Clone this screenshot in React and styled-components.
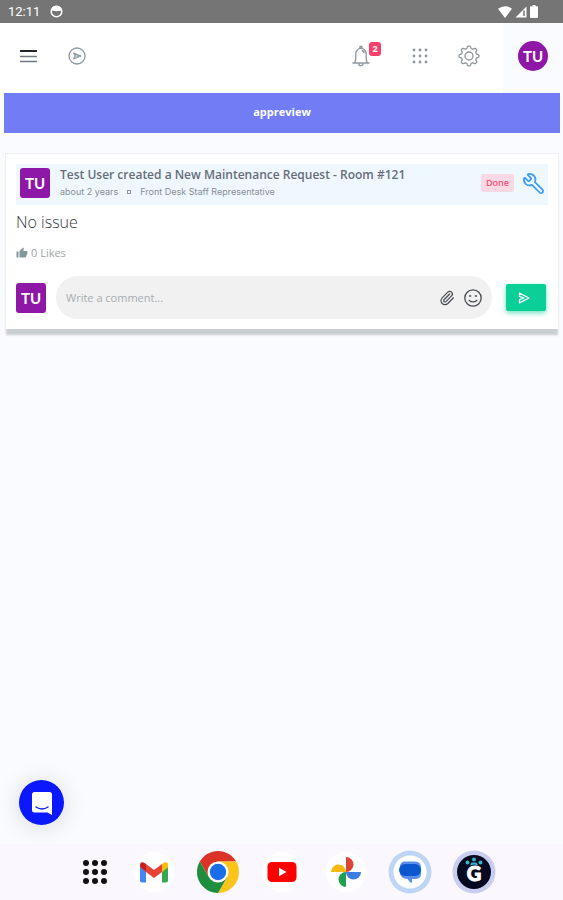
import React from "react"
import styled, { createGlobalStyle } from "styled-components"
import { Paperclip, Wrench } from "lucide-react"
import { MdThumbUp } from "react-icons/md"

const GlobalStyle = createGlobalStyle`
  * {
    box-sizing: border-box;
  }
  body {
    margin: 0;
    background: #fafbfe;
    color: #3f4650;
    font-family: "Open Sans", "Noto Sans", sans-serif;
  }
  button,
  input {
    font-family: inherit;
  }
  button {
    padding: 0;
    border: 0;
    background: none;
    cursor: pointer;
  }
  svg {
    display: block;
  }
`

const Page = styled.div`
  min-height: 100vh;
  display: flex;
  flex-direction: column;
`

const StatusBar = styled.div`
  height: 23px;
  padding: 0 25px 0 8px;
  display: flex;
  align-items: center;
  justify-content: space-between;
  background: #757575;
  color: #fff;
  font-family: Roboto, sans-serif;
  font-size: 13px;
`

const StatusGroup = styled.div`
  display: flex;
  align-items: center;
  gap: ${(props) => props.$gap}px;
`

const TopBar = styled.header`
  height: 70px;
  padding-left: 20px;
  display: flex;
  background: #fff;
`

const NavGroup = styled.div`
  display: flex;
  align-items: center;
  gap: ${(props) => props.$gap}px;
  padding-bottom: 4px;
  margin-right: ${(props) => props.$after};
`

const IconButton = styled.button`
  position: relative;
  display: flex;
  color: ${(props) => props.$color || "#8d979e"};
`

const Count = styled.span`
  position: absolute;
  top: -3px;
  right: -10px;
  width: 12px;
  height: 14px;
  border-radius: 3px;
  background: #f5416c;
  color: #fff;
  font-size: 9px;
  font-weight: 700;
  line-height: 14px;
  text-align: center;
`

const Profile = styled.div`
  width: 60px;
  padding-bottom: 4px;
  display: flex;
  align-items: center;
  justify-content: center;
  background: #fafbfe;
`

const Avatar = styled.span`
  flex: none;
  width: 30px;
  height: 30px;
  display: flex;
  align-items: center;
  justify-content: center;
  border-radius: ${(props) => (props.$round ? "50%" : "3px")};
  background: #8e17a8;
  color: #fff;
  font-family: Lato, sans-serif;
  font-size: 15px;
  font-weight: 700;
`

const Banner = styled.div`
  height: 40px;
  margin: 0 3px 0 4px;
  background: #727cf5;
  color: #fff;
  font-size: 11px;
  font-weight: 700;
  line-height: 38px;
  text-align: center;
`

const Card = styled.article`
  margin: 20px 4px 0 5px;
  padding: 10px;
  border: 1px solid #eef0f4;
  border-bottom: 0;
  background: #fff;
  box-shadow: 0 7px 2px -1px #c9ced1;
`

const CardHead = styled.header`
  min-height: 41px;
  padding: 0 3px 3px 4px;
  display: flex;
  align-items: center;
  background: #f0f8ff;
`

const Heading = styled.div`
  flex: 1;
  min-width: 0;
  margin-left: 10px;
`

const Title = styled.h1`
  margin: 0;
  font-size: 12px;
  font-weight: 600;
  line-height: 18px;
  color: #656d78;
`

const Meta = styled.p`
  margin: 0;
  display: flex;
  align-items: center;
  gap: 9px;
  font-family: Inter, sans-serif;
  font-size: 9px;
  line-height: 16px;
  color: #858d95;
`

const Dot = styled.span`
  width: 4px;
  height: 4px;
  border: 1px solid #8f989f;
`

const Tag = styled.span`
  margin-right: 8px;
  padding: 0 5px;
  border-radius: 2px;
  background: #fbd9e4;
  color: #f0527f;
  font-size: 9px;
  font-weight: 600;
  line-height: 18px;
`

const FlippedWrench = styled(Wrench)`
  transform: scaleX(-1);
`

const Message = styled.p`
  margin: 6px 0 0;
  font-size: 16px;
  line-height: 22px;
  font-weight: 300;
  color: #32373d;
`

const Likes = styled.button`
  margin-top: 11px;
  display: flex;
  align-items: center;
  gap: 3px;
  font-size: 11px;
  line-height: 18px;
  color: #a0a6aa;
  svg {
    color: #84979a;
  }
`

const CommentForm = styled.form`
  margin-top: 14px;
  padding-right: 2px;
  display: flex;
  align-items: center;
`

const Field = styled.div`
  flex: 1;
  min-width: 0;
  height: 43px;
  margin: 0 14px 0 10px;
  padding: 0 10px;
  display: flex;
  align-items: center;
  gap: 9px;
  border-radius: 22px;
  background: #f1f1f1;
`

const CommentInput = styled.input`
  flex: 1;
  min-width: 0;
  padding: 0;
  border: 0;
  outline: 0;
  background: none;
  font-size: 11px;
  &::placeholder {
    color: #a8acb0;
    opacity: 1;
  }
`

const SendButton = styled.button`
  width: 40px;
  height: 27px;
  padding-right: 5px;
  display: flex;
  align-items: center;
  justify-content: center;
  border-radius: 2px;
  background: #0acf97;
  box-shadow: 0 2px 5px rgba(10, 207, 151, 0.6);
`

const Launcher = styled.button`
  position: fixed;
  left: 19px;
  bottom: 75px;
  width: 45px;
  height: 45px;
  display: flex;
  align-items: center;
  justify-content: center;
  border-radius: 50%;
  background: #0a18fb;
  box-shadow: 0 2px 24px rgba(0, 0, 0, 0.14);
`

const Dock = styled.nav`
  height: 56px;
  margin-top: auto;
  padding-left: 10px;
  display: flex;
  align-items: center;
  justify-content: center;
  gap: 20px;
  background: #faf8fe;
`

const DockButton = styled.button`
  width: ${(props) => (props.$narrow ? 34 : 44)}px;
  height: 44px;
  display: flex;
  align-items: center;
  justify-content: center;
  color: #111;
`

const DotGrid = ({ size, step, r }) => (
  <svg width={size} height={size} viewBox={`0 0 ${size} ${size}`} fill="currentColor">
    {[-1, 0, 1].map((row) =>
      [-1, 0, 1].map((col) => (
        <circle
          key={`${row}${col}`}
          cx={size / 2 + col * step}
          cy={size / 2 + row * step}
          r={r}
        />
      ))
    )}
  </svg>
)

const FaceIcon = () => (
  <svg width="13" height="13" viewBox="0 0 13 13">
    <circle cx="6.5" cy="6.5" r="5.3" fill="none" stroke="#fff" strokeWidth="1.5" />
    <path d="M1.5 5.5V4A5.5 5.5 0 0 1 11.5 4v1.5Q6.5 7 1.5 5.5z" fill="#fff" />
  </svg>
)

const WifiIcon = () => (
  <svg width="14" height="12" viewBox="0 0 14 12">
    <path d="M0 2.8Q7-2.4 14 2.8L7 12z" fill="#fff" />
  </svg>
)

const SignalIcon = () => (
  <svg width="12" height="12" viewBox="0 0 12 12">
    <path d="M11.5 0.5V11.5H0.5z" fill="#fff" />
    <path d="M9 4.5V10" stroke="#757575" strokeWidth="1.5" />
  </svg>
)

const BatteryIcon = () => (
  <svg width="8" height="13" viewBox="0 0 8 13">
    <path d="M2.5 0h3v1.3H7q1 0 1 1V12q0 1-1 1H1q-1 0-1-1V2.3q0-1 1-1h1.5z" fill="#fff" />
  </svg>
)

const MenuIcon = () => (
  <svg width="18" height="13" viewBox="0 0 18 13">
    <path d="M0 1h17" stroke="#23272d" strokeWidth="2" />
    <path d="M0 6.5h17M0 11.5h17" stroke="#737980" strokeWidth="1.6" />
  </svg>
)

const ShareIcon = () => (
  <svg width="18" height="18" viewBox="0 0 18 18" fill="none" stroke="currentColor">
    <circle cx="9" cy="9" r="8" strokeWidth="1.3" />
    <path d="M5.5 6l7.5 3-7.5 3 1.8-3zM7.3 9H11" strokeWidth="1.2" strokeLinejoin="round" />
  </svg>
)

const BellIcon = () => (
  <svg width="20" height="22" viewBox="0 0 20 22" fill="none" stroke="currentColor" strokeWidth="1.3">
    <path d="M9 3V1.5h2V3M1.5 18h17M3.8 17.5Q4.8 16 4.8 13V9a5.2 5.6 0 0 1 10.4 0v4q0 3 1 4.5" />
    <path d="M7.8 18.5a2.2 2.2 0 0 0 4.4 0M10.8 5.5a2.7 2.7 0 0 1 2.3 2.8" />
  </svg>
)

// eight soft teeth: the radius swings either side of 8.8
const gearPoints = Array.from({ length: 96 }, (_, i) => {
  const angle = (i / 96) * Math.PI * 2
  const radius = 8.8 + 1.2 * Math.tanh(2 * Math.cos(8 * angle))
  return `${11 + radius * Math.cos(angle)},${11 + radius * Math.sin(angle)}`
}).join(" ")

const GearIcon = () => (
  <svg width="22" height="22" viewBox="0 0 22 22" fill="none" stroke="currentColor" strokeWidth="1.3">
    <polygon points={gearPoints} strokeLinejoin="round" />
    <circle cx="11" cy="11" r="4" />
  </svg>
)

const SmileIcon = () => (
  <svg width="18" height="18" viewBox="0 0 18 18" fill="none" stroke="currentColor" strokeWidth="1.3">
    <circle cx="9" cy="9" r="8.2" />
    <path d="M5.2 11.4q3.8 3 7.6 0M5.5 7h1.2M11.3 7h1.2" strokeLinecap="round" />
  </svg>
)

const SendIcon = () => (
  <svg width="12" height="12" viewBox="0 0 12 12" fill="none" stroke="#fff" strokeWidth="1.3">
    <path d="M1.5 1.2L11 6l-9.5 4.8V7.6L6 6 1.5 4.4z" strokeLinejoin="round" />
  </svg>
)

const ChatIcon = () => (
  <svg width="22" height="24" viewBox="0 0 22 24">
    <path d="M3.5 1h15Q21 1 21 3.5V24l-4.5-2.5h-13Q1 21.5 1 19V3.5Q1 1 3.5 1z" fill="#fff" />
    <path d="M5 16q6 4 12 0" fill="none" stroke="#0a18fb" strokeWidth="1.4" strokeLinecap="round" />
  </svg>
)

const GmailIcon = () => (
  <svg width="42" height="42" viewBox="0 0 42 42">
    <circle cx="21" cy="21" r="20" fill="#fff" />
    <path d="M7 16l6 4.5V31.5H9q-2 0-2-2z" fill="#4285f4" />
    <path d="M35 16l-6 4.5V31.5h4q2 0 2-2z" fill="#34a853" />
    <path d="M29 13l1-.8q5-2.5 5 2.3V16l-6 5z" fill="#fbbc04" />
    <path d="M13 13l-1-.8q-5-2.5-5 2.3V16l6 5z" fill="#c5221f" />
    <path d="M13 13l8 6 8-6v8l-8 6-8-6z" fill="#ea4335" />
  </svg>
)

const ChromeIcon = () => (
  <svg width="42" height="42" viewBox="2 2 44 44">
    <path d="M4.95 13A22 22 0 0 1 43.05 13H24v11l-9.53 5.5z" fill="#db3328" />
    <path d="M43.05 13A22 22 0 0 1 24 46l9.53-16.5L24 24V13z" fill="#fcc419" />
    <path d="M24 46A22 22 0 0 1 4.95 13l9.52 16.5L24 24l9.53 5.5z" fill="#1e8e3e" />
    <circle cx="24" cy="24" r="11" fill="#fff" />
    <circle cx="24" cy="24" r="8.6" fill="#1a6fe8" />
  </svg>
)

const YoutubeIcon = () => (
  <svg width="42" height="42" viewBox="0 0 42 42">
    <circle cx="21" cy="21" r="20" fill="#fff" />
    <rect x="6.5" y="11" width="29" height="20" rx="4.5" fill="#f00" />
    <path d="M18 16.8l7.5 4.2-7.5 4.2z" fill="#fff" />
  </svg>
)

const PhotosIcon = () => (
  <svg width="42" height="42" viewBox="0 0 42 42">
    <circle cx="21" cy="21" r="20" fill="#fff" />
    <path d="M21 6a7.5 7.5 0 0 1 0 15z" fill="#db4437" />
    <path d="M36 21a7.5 7.5 0 0 1-15 0z" fill="#3b7de0" />
    <path d="M21 36a7.5 7.5 0 0 1 0-15z" fill="#1fa050" />
    <path d="M6 21a7.5 7.5 0 0 1 15 0z" fill="#f5b912" />
  </svg>
)

const MessagesIcon = () => (
  <svg width="44" height="44" viewBox="0 0 44 44">
    <circle cx="22" cy="22" r="21.5" fill="#bfd5f3" />
    <circle cx="22" cy="22" r="16.5" fill="#fff" />
    <path d="M17 11.5h10q6 0 6 6v6q0 5-5 5.500h-4V33q-3-1-4.500-4Q12 28.500 12 22v-5q0-5.500 5-5.500z" fill="#5a8fee" />
    <rect x="11" y="14" width="22" height="12" rx="6" fill="#0b57d0" />
  </svg>
)

const GuestIcon = () => (
  <svg width="44" height="44" viewBox="0 0 44 44">
    <circle cx="22" cy="22" r="21.5" fill="#c9cdee" />
    <circle cx="22" cy="22" r="17" fill="#050a20" />
    <g fill="#35b6cf">
      <circle cx="15.5" cy="12.5" r="1.9" />
      <circle cx="22" cy="9.5" r="1.9" />
      <circle cx="28.5" cy="12.5" r="1.9" />
      <path d="M18 15.5l1.5-3h5l1.5 3-4-1z" />
    </g>
    <text
      x="22"
      y="31"
      fill="#fff"
      stroke="#fff"
      textAnchor="middle"
      fontFamily="Lato, sans-serif"
      fontSize="20"
      fontWeight="900"
    >
      G
    </text>
  </svg>
)

const apps = [
  { name: "All apps", narrow: true, icon: <DotGrid size={28} step={9} r={3} /> },
  { name: "Gmail", icon: <GmailIcon /> },
  { name: "Chrome", icon: <ChromeIcon /> },
  { name: "YouTube", icon: <YoutubeIcon /> },
  { name: "Photos", icon: <PhotosIcon /> },
  { name: "Messages", icon: <MessagesIcon /> },
  { name: "Guest app", icon: <GuestIcon /> },
]

const App = () => (
  <Page>
    <GlobalStyle />
    <StatusBar>
      <StatusGroup $gap={10}>
        <span>12:11</span>
        <FaceIcon />
      </StatusGroup>
      <StatusGroup $gap={3}>
        <WifiIcon />
        <SignalIcon />
        <BatteryIcon />
      </StatusGroup>
    </StatusBar>
    <TopBar>
      <NavGroup $gap={30} $after="auto">
        <IconButton aria-label="Menu">
          <MenuIcon />
        </IconButton>
        <IconButton aria-label="Share">
          <ShareIcon />
        </IconButton>
      </NavGroup>
      <NavGroup $after="39px">
        <IconButton aria-label="Notifications">
          <BellIcon />
          <Count>2</Count>
        </IconButton>
      </NavGroup>
      <NavGroup $gap={28} $after="23px">
        <IconButton aria-label="Apps">
          <DotGrid size={20} step={6} r={1.4} />
        </IconButton>
        <IconButton aria-label="Settings">
          <GearIcon />
        </IconButton>
      </NavGroup>
      <Profile>
        <Avatar $round>TU</Avatar>
      </Profile>
    </TopBar>
    <Banner>appreview</Banner>
    <main>
      <Card>
        <CardHead>
          <Avatar>TU</Avatar>
          <Heading>
            <Title>Test User created a New Maintenance Request - Room #121</Title>
            <Meta>
              <span>about 2 years</span>
              <Dot />
              <span>Front Desk Staff Representative</span>
            </Meta>
          </Heading>
          <Tag>Done</Tag>
          <IconButton aria-label="Maintenance" $color="#3b9cf5">
            <FlippedWrench size={23} strokeWidth={1.8} />
          </IconButton>
        </CardHead>
        <Message>No issue</Message>
        <Likes>
          <MdThumbUp size={12} />
          0 Likes
        </Likes>
        <CommentForm onSubmit={(e) => e.preventDefault()}>
          <Avatar>TU</Avatar>
          <Field>
            <CommentInput aria-label="Comment" placeholder="Write a comment..." />
            <IconButton type="button" aria-label="Attach file" $color="#474b50">
              <Paperclip size={16} strokeWidth={1.8} />
            </IconButton>
            <IconButton type="button" aria-label="Emoji" $color="#474b50">
              <SmileIcon />
            </IconButton>
          </Field>
          <SendButton aria-label="Send">
            <SendIcon />
          </SendButton>
        </CommentForm>
      </Card>
    </main>
    <Launcher aria-label="Open chat">
      <ChatIcon />
    </Launcher>
    <Dock>
      {apps.map((app) => (
        <DockButton key={app.name} aria-label={app.name} $narrow={app.narrow}>
          {app.icon}
        </DockButton>
      ))}
    </Dock>
  </Page>
)

export default App
